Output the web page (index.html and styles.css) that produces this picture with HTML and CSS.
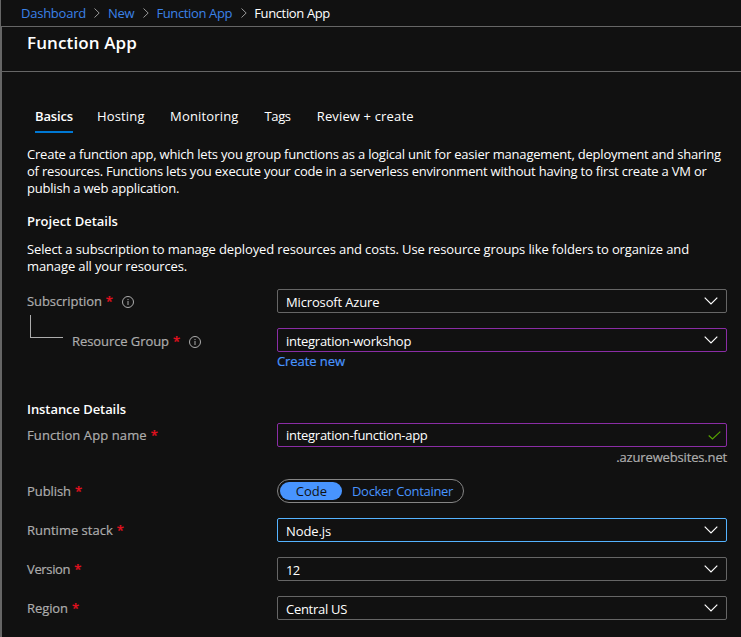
FILE: index.html
```
<!DOCTYPE html>
<html lang="en">
<head>
<meta charset="utf-8">
<title>Function App</title>
<link rel="stylesheet" href="styles.css">
</head>
<body>
<svg class="defs" aria-hidden="true">
  <symbol id="chevron" viewBox="0 0 14 8"><path d="M.7.7 7 7 13.3.7"/></symbol>
  <symbol id="crumb" viewBox="0 0 6 10"><path d="M.5.5 5.2 5 .5 9.500"/></symbol>
  <symbol id="check" viewBox="0 0 13 9"><path d="M.7 4.500 4.500 8 12.300.600"/></symbol>
  <symbol id="info" viewBox="0 0 12 12"><circle cx="6" cy="6" r="5.500"/><path d="M6 5v4M6 3v1.100"/></symbol>
</svg>
<nav class="breadcrumb">
  <a>Dashboard</a><svg class="sep"><use href="#crumb"/></svg>
  <a>New</a><svg class="sep"><use href="#crumb"/></svg>
  <a class="app">Function App</a><svg class="sep"><use href="#crumb"/></svg>
  <span class="app">Function App</span>
</nav>
<main class="blade">
  <header class="blade-header"><h1>Function App</h1></header>
  <div class="content">
    <div class="tabs">
      <span class="tab active">Basics</span>
      <span class="tab">Hosting</span>
      <span class="tab monitoring">Monitoring</span>
      <span class="tab tags">Tags</span>
      <span class="tab">Review + create</span>
    </div>
    <p class="intro">Create a function app, which lets you group functions as a logical unit for easier management, deployment and sharing<br>of resources. Functions lets you execute your code in a serverless environment without having to first create a VM or<br>publish a web application.</p>
    <h2>Project Details</h2>
    <p class="details">Select a subscription to manage deployed resources and costs. Use resource groups like folders to organize and<br>manage all your resources.</p>

    <div class="row subscription">
      <label>Subscription <b>*</b><svg class="info"><use href="#info"/></svg></label>
      <div class="box select azure"><span>Microsoft Azure</span><svg class="chev"><use href="#chevron"/></svg></div>
    </div>
    <div class="row">
      <label class="child"><i class="elbow"></i>Resource Group <b>*</b><svg class="info"><use href="#info"/></svg></label>
      <div class="box select edited"><span>integration-workshop</span><svg class="chev"><use href="#chevron"/></svg></div>
    </div>
    <a class="create">Create new</a>

    <h2 class="instance">Instance Details</h2>
    <div class="row name">
      <label class="app-name">Function App name <b>*</b></label>
      <div class="box edited"><span>integration-function-app</span><svg class="check"><use href="#check"/></svg></div>
    </div>
    <div class="suffix">.azurewebsites.net</div>
    <div class="row">
      <label>Publish <b>*</b></label>
      <div class="pill"><span class="on">Code</span><span class="off">Docker Container</span></div>
    </div>
    <div class="row">
      <label class="runtime">Runtime stack <b>*</b></label>
      <div class="box select focused"><span class="node">Node.js</span><svg class="chev"><use href="#chevron"/></svg></div>
    </div>
    <div class="row">
      <label class="version">Version <b>*</b></label>
      <div class="box select"><span class="number">12</span><svg class="chev"><use href="#chevron"/></svg></div>
    </div>
    <div class="row">
      <label>Region <b>*</b></label>
      <div class="box select"><span>Central US</span><svg class="chev"><use href="#chevron"/></svg></div>
    </div>
  </div>
</main>
</body>
</html>
```
FILE: styles.css
```
* { box-sizing: border-box; }
body {
  margin: 0;
  height: 637px;
  overflow: hidden;
  background: #111;
  color: #fff;
  font: 13px/17px "Open Sans", "Noto Sans", sans-serif;
}
.defs { display: none; }
svg { fill: none; stroke: #fff; flex: none; }
h1, h2, p { margin: 0; }
a { color: #4894fe; }

.breadcrumb {
  display: flex;
  align-items: center;
  height: 26px;
  padding-left: 20px;
  border-left: 1px solid #666;
  letter-spacing: -.24px;
}
.breadcrumb a { color: #3b82e8; }
.breadcrumb .app { letter-spacing: -.36px; }
.sep { width: 6px; height: 10px; margin: 0 7.500px 0 8.500px; stroke: #999; }

.blade { height: 611px; border-left: 2px solid #666; border-top: 1px solid #666; }
.blade-header { height: 45px; padding: 4px 0 0 25px; border-bottom: 1px solid #666; }
h1 { font-size: 17px; line-height: 24px; font-weight: 600; letter-spacing: .12px; }
.content { padding: 36px 14px 0 25px; }

.tabs { display: flex; padding-left: 8px; gap: 24px; height: 25px; letter-spacing: .15px; }
.tab { height: 25px; white-space: nowrap; }
.tab.active { width: 38px; font-weight: 600; letter-spacing: -.14px; border-bottom: 2px solid #0078d4; }
.tab.monitoring { margin-left: 1.500px; }
.tab.tags { margin-left: 2px; margin-right: 2px; letter-spacing: -.35px; }

.intro { margin-top: 13px; letter-spacing: -.21px; white-space: nowrap; }
h2 { margin-top: 16px; font-size: 13px; line-height: 17px; font-weight: 600; }
.details { margin-top: 11px; letter-spacing: -.126px; white-space: nowrap; }

.row { display: grid; grid-template-columns: 250px 450px; align-items: center; height: 24px; margin-bottom: 15px; }
.row.subscription { margin-top: 14px; }
.row label { display: flex; align-items: center; position: relative; color: #adadad; letter-spacing: -.08px; white-space: nowrap; -webkit-text-stroke: .2px; }
.row label b { color: #e0101f; font-weight: 600; margin-left: 4px; }
.row label.child { padding: 2px 0 0 45px; }
.row label.app-name { letter-spacing: .1px; }
.row label.runtime { letter-spacing: 0; }
.row label.version { letter-spacing: -.35px; }
.elbow { position: absolute; left: 3px; top: -16px; width: 33px; height: 23px; border: solid #adadad; border-width: 0 0 1px 1px; }
.info { width: 12px; height: 12px; margin: 1px 0 0 9px; }
.info { stroke: #adadad; }

.box {
  display: flex;
  align-items: center;
  justify-content: space-between;
  height: 24px;
  padding: 1px 8px 0 8px;
  border: 1px solid #666;
  border-radius: 2px;
  letter-spacing: -.28px;
}
.box.select { padding-top: 2px; }
.box.azure { letter-spacing: -.15px; }
.box .node { letter-spacing: -.1px; }
.box .number { letter-spacing: -.8px; }
.box.edited { border-color: #8a2da5; }
.box.focused { border-color: #55b3ff; }
.chev { width: 14px; height: 8px; margin-top: -2px; stroke-width: 1.200; }
.check { width: 13px; height: 9px; margin-right: -3px; stroke: #57a300; stroke-width: 1.200; }
.create { display: block; width: 70px; margin: -14px 0 0 250px; letter-spacing: -.07px; white-space: nowrap; -webkit-text-stroke: .2px; }
h2.instance { margin-top: 31px; letter-spacing: -.07px; }
.row.name { margin: 5px 0 2px; }
.suffix { height: 30px; color: #adadad; letter-spacing: -.16px; text-align: right; -webkit-text-stroke: .2px; }

.pill { display: flex; align-items: center; width: 187px; height: 24px; padding: 0 2px; border: 1px solid #858585; border-radius: 12px; color: #4894fe; }
.on { width: 62px; height: 18px; line-height: 18px; padding-left: 1px; border-radius: 9px; background: #4894fe; color: #111; text-align: center; }
.off { margin-left: 10px; letter-spacing: -.31px; white-space: nowrap; }
```
